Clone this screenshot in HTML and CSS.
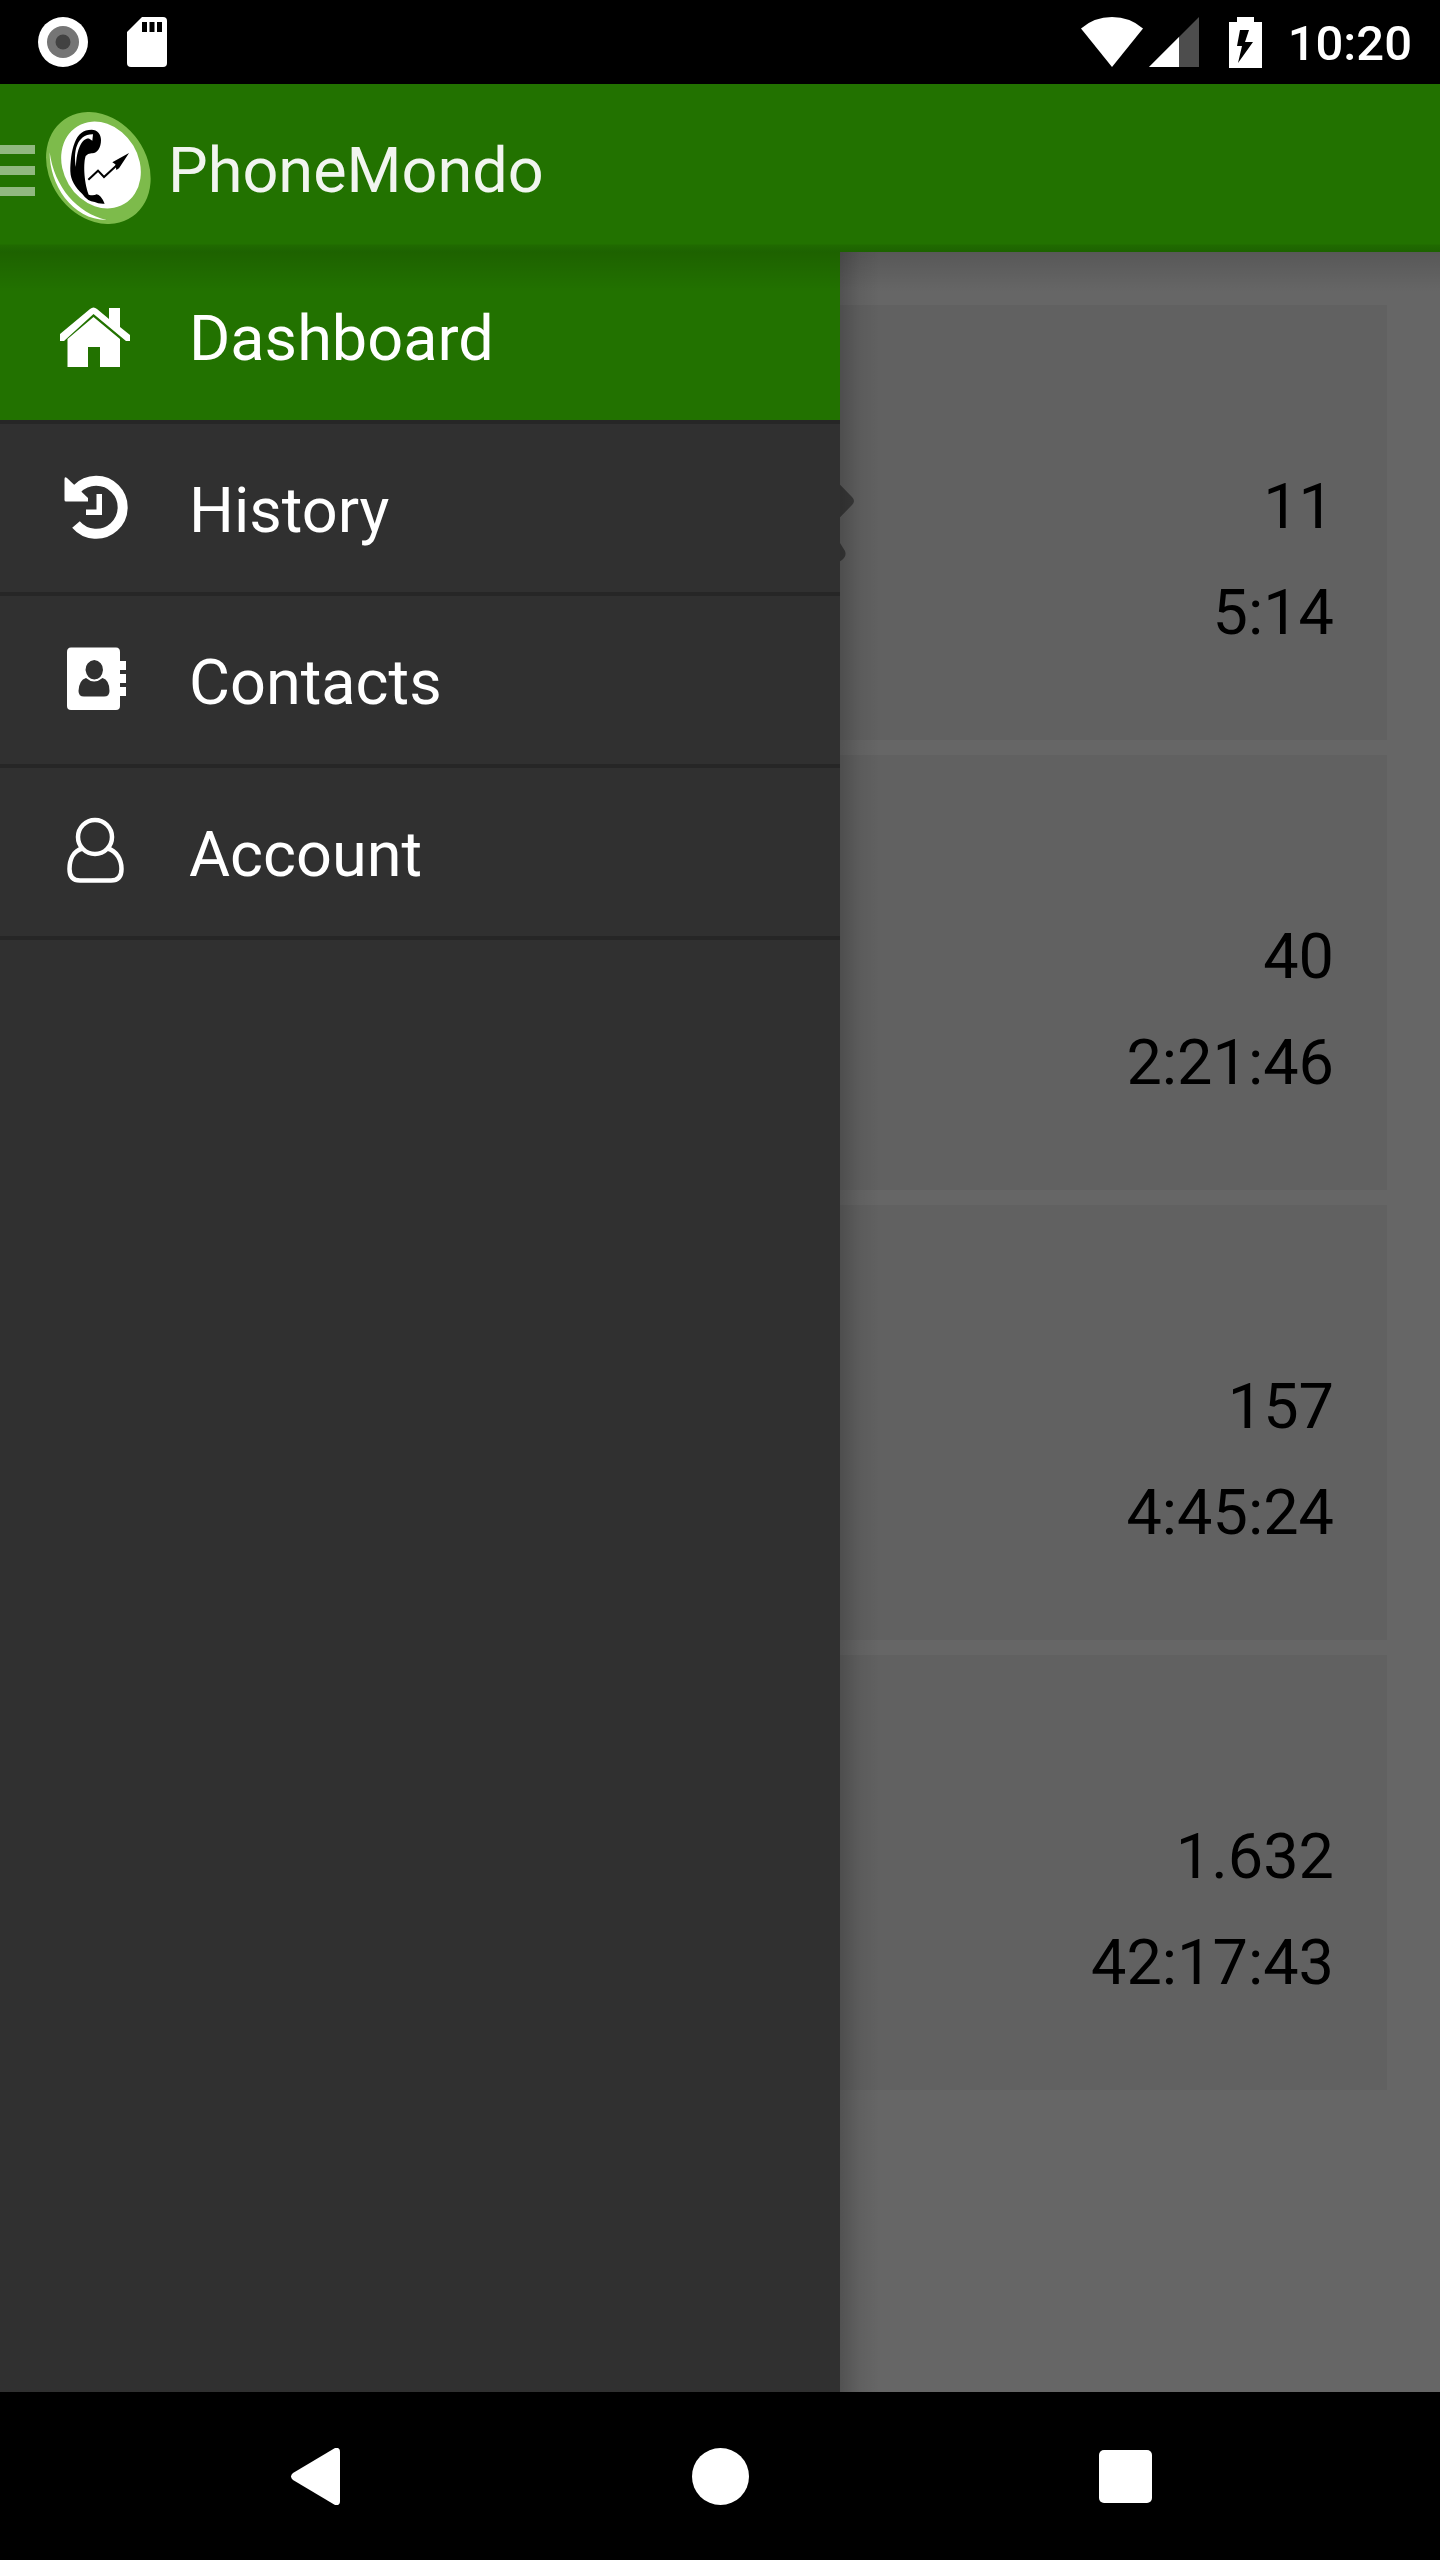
FILE: index.html
```html
<!DOCTYPE html>
<html lang="en">
<head>
    <meta charset="UTF-8">
    <meta name="viewport" content="width=device-width, initial-scale=1.0">
    <title>PhoneMondo</title>
    <link rel="stylesheet" href="styles.css">
</head>
<body>
    <div class="status-bar">
        <div class="notifications">
            <svg width="50" height="50" viewBox="0 0 50 50">
                <circle cx="25" cy="25" r="25" fill="#fff"/>
                <circle cx="25" cy="25" r="16" fill="#757575"/>
                <circle cx="25" cy="25" r="7.5" fill="#424242"/>
            </svg>
            <svg width="40" height="50" viewBox="0 0 40 50">
                <path d="M15 0H36a4 4 0 0 1 4 4V46a4 4 0 0 1-4 4H4a4 4 0 0 1-4-4V15z" fill="#fff"/>
                <path d="M15 5h5v10h-5zM22.500 5h5v10h-5zM30 5h5v10h-5z" fill="#000"/>
            </svg>
        </div>
        <div class="system">
            <svg class="wifi" width="62" height="50" viewBox="0 0 62 50">
                <path d="M31 50L0 11.500Q13 0 31 0T62 11.500z" fill="#fff"/>
            </svg>
            <svg class="signal" width="50" height="50" viewBox="0 0 50 50">
                <path d="M0 50L50 0V50z" fill="#4d4d4d"/>
                <path d="M0 50L30 20V50z" fill="#fff"/>
            </svg>
            <svg class="battery" width="33" height="51" viewBox="0 0 33 51">
                <path d="M8 0H25V5H33V51H0V5H8z" fill="#fff"/>
                <path d="M11 13H20L16 25H24L9 46L13 29H8z" fill="#000"/>
            </svg>
            <span class="clock">10:20</span>
        </div>
    </div>

    <header class="app-bar">
        <button class="menu-button" aria-label="Menu">
            <svg width="35" height="51" viewBox="0 0 35 51">
                <path d="M0 0H35V9H0zM0 21H35V30H0zM0 42H35V51H0z" fill="#91b880"/>
            </svg>
        </button>
        <svg class="logo" width="105" height="112" viewBox="138 84 315 336">
            <ellipse cx="295" cy="252" rx="178" ry="145.500" transform="rotate(55 295 252)" fill="#7dbb4b"/>
            <ellipse cx="303" cy="243" rx="136" ry="113" transform="rotate(59 303 243)" fill="#fff"/>
            <path d="M149 205C148 300 215 408 320 408C232 388 163 310 149 205z" fill="#fff"/>
            <path d="M275 137C292 137 303 150 303 168C303 190 292 208 277 208Q264 207 257 216C250 236 251 290 266 332Q280 336 290 331Q302 332 314 359Q294 360 284 354Q262 352 247 330C226 310 212 290 211 262C211 236 214 200 224 176C234 150 250 137 275 137z" fill="#000"/>
            <path d="M228 249C219 205 230 150 279 151L277 170L268 164C250 160 229 190 228 249z" fill="#fff"/>
            <path d="M265 287L294 260L312 279L352 242" fill="none" stroke="#000" stroke-width="6"/>
            <path d="M387 207L337 235L346 241L349 258L357 253z" fill="#000"/>
        </svg>
        <h1 class="title">PhoneMondo</h1>
    </header>

    <div class="content">
        <main class="cards">
            <section class="card">
                <svg class="call-icon" width="268" height="160" viewBox="0 0 268 160">
                    <path d="M150 48H226V22Q226 15 232 20L266 55Q270 59 266 63L232 98Q226 103 226 96V70H150z"/>
                    <path d="M20 18C60 96 140 150 244 126L256 118Q261 114 259 109L254 101L244 84L190 92L182 108C130 96 92 70 74 40L84 24L64 0z"/>
                </svg>
                <div class="values">
                    <span>11</span>
                    <span>5:14</span>
                </div>
            </section>
            <section class="card">
                <div class="values">
                    <span>40</span>
                    <span>2:21:46</span>
                </div>
            </section>
            <section class="card">
                <div class="values">
                    <span>157</span>
                    <span>4:45:24</span>
                </div>
            </section>
            <section class="card">
                <div class="values">
                    <span>1.632</span>
                    <span>42:17:43</span>
                </div>
            </section>
        </main>

        <div class="scrim"></div>

        <nav class="drawer">
            <a class="item active" href="#dashboard">
                <svg width="70" height="70" viewBox="0 0 70 70">
                    <path d="M30 8Q33.500 5 37 8L49 18V7H60V26L70 34V40H66L33.500 13L4 40H0V33z"/>
                    <path d="M33.500 16L60 38V66H40V46H28V66H7.500V38z"/>
                </svg>
                <span>Dashboard</span>
            </a>
            <a class="item" href="#history">
                <svg width="70" height="70" viewBox="0 0 70 70">
                    <path class="line" d="M17 16A26.500 26.500 0 1 1 16 51.500" stroke-width="10"/>
                    <path d="M4.500 6Q4.500 3 7 5L28 25V28.500H6Q4.500 28.500 4.500 27z"/>
                    <path d="M36.500 21H42V42H26V36.500H36.500z"/>
                </svg>
                <span>History</span>
            </a>
            <a class="item" href="#contacts">
                <svg width="70" height="70" viewBox="0 0 70 70">
                    <path d="M11 2.500H56Q60 2.500 60 7V16H66V25H60V29H66V38H60V42H66V51H60V61Q60 65 56 65H11Q7 65 7 61V7Q7 2.500 11 2.500z"/>
                    <path class="hole" d="M34.300 15A9.500 9.500 0 0 1 43 25Q42 34 34.300 34.500Q27 34 25.500 25A9.500 9.500 0 0 1 34.300 15zM26 33Q34 40 42.500 33Q49.500 35 49.500 46Q49.500 51.500 44 51.500H24Q18.500 51.500 18.500 46Q19 35 26 33z"/>
                </svg>
                <span>Contacts</span>
            </a>
            <a class="item" href="#account">
                <svg width="70" height="70" viewBox="0 0 70 70">
                    <circle class="line" cx="35" cy="20" r="17" stroke-width="4.5"/>
                    <path class="line" d="M22.500 31.500C13 34 9.500 43 9.500 52Q9.500 63.500 20 63.500H51Q61.500 63.500 61.500 52C61.500 43 57 34 47.500 31.500" stroke-width="4.5"/>
                </svg>
                <span>Account</span>
            </a>
        </nav>
    </div>

    <footer class="nav-bar">
        <button aria-label="Back">
            <svg width="57" height="57" viewBox="0 0 57 57"><path d="M48 0Q53 -1 53 4V53Q53 58 48 57L6 32Q2 28.500 6 25z"/></svg>
        </button>
        <button aria-label="Home">
            <svg width="57" height="57" viewBox="0 0 57 57"><circle cx="28.500" cy="28.500" r="28.500"/></svg>
        </button>
        <button aria-label="Recent apps">
            <svg width="57" height="57" viewBox="0 0 57 57"><rect x="2" y="2" width="53" height="53" rx="5"/></svg>
        </button>
    </footer>
</body>
</html>
```
FILE: styles.css
```css
* {
    box-sizing: border-box;
}
body {
    margin: 0;
    min-height: 100vh;
    display: flex;
    flex-direction: column;
    background: #000;
    font-family: Roboto, sans-serif;
    font-size: 63px;
}
svg {
    display: block;
    flex-shrink: 0;
}
button {
    padding: 0;
    border: none;
    background: none;
    cursor: pointer;
}

/* status bar */
.status-bar {
    display: flex;
    justify-content: space-between;
    align-items: center;
    height: 84px;
    padding: 0 28px 0 38px;
}
.notifications {
    display: flex;
    gap: 39px;
}
.system {
    display: flex;
    align-items: center;
}
.signal {
    margin-left: 6px;
}
.battery {
    margin: 0 26px 0 30px;
}
.clock {
    padding-top: 2px;
    color: #fff;
    font-size: 49px;
    font-weight: 500;
}

/* app bar */
.app-bar {
    display: flex;
    align-items: center;
    height: 168px;
    background: linear-gradient(to top, #1d6201, #206a00 7px, #227200 8px);
}
.logo {
    margin: 0 17px 0 11px;
}
.title {
    margin: 0;
    padding-top: 4px;
    color: #f1f5ef;
    font-size: 63px;
    font-weight: 400;
}
.menu-button {
    padding-top: 4px;
}

/* content */
.content {
    position: relative;
    flex: 1;
    background: #fff;
}
.content::after {
    content: "";
    position: absolute;
    top: 0;
    left: 0;
    right: 0;
    height: 40px;
    background: linear-gradient(rgba(0, 0, 0, 0.14), transparent);
    pointer-events: none;
}
.cards {
    display: flex;
    flex-direction: column;
    gap: 15px;
    padding: 53px 53px 0;
}
.card {
    display: grid;
    grid-template-columns: 1fr 268px 1fr;
    min-height: 435px;
    padding: 0 53px 74px;
    background: #f3f3f3;
}
.call-icon {
    grid-column: 2;
    align-self: end;
    margin-bottom: 64px;
    fill: #919191;
}
.values {
    grid-column: 3;
    display: flex;
    flex-direction: column;
    justify-content: flex-end;
    line-height: 106px;
    text-align: right;
    color: #000;
}
.scrim {
    position: absolute;
    inset: 0;
    background: rgba(0, 0, 0, 0.6);
}

/* drawer */
.drawer {
    position: absolute;
    top: 0;
    bottom: 0;
    left: 0;
    width: 840px;
    max-width: 84%;
    background: #303030;
}
.drawer::after {
    content: "";
    position: absolute;
    top: 0;
    bottom: 0;
    left: 100%;
    width: 40px;
    background: linear-gradient(to right, rgba(0, 0, 0, 0.2), rgba(0, 0, 0, 0.06) 50%, transparent);
}
.item {
    display: flex;
    align-items: center;
    gap: 59px;
    height: 172px;
    padding-left: 60px;
    border-bottom: 4px solid #262626;
    color: #fff;
    text-decoration: none;
}
.item.active {
    background: #227200;
}
.item span {
    padding-top: 4px;
}
.item svg {
    fill: #fff;
}
.item .line {
    fill: none;
    stroke: #fff;
}
.item .hole {
    fill: #303030;
}

/* navigation bar */
.nav-bar {
    display: flex;
    justify-content: center;
    height: 168px;
}
.nav-bar button {
    display: flex;
    justify-content: center;
    align-items: center;
    width: 405px;
}
.nav-bar svg {
    fill: #fff;
}
```
